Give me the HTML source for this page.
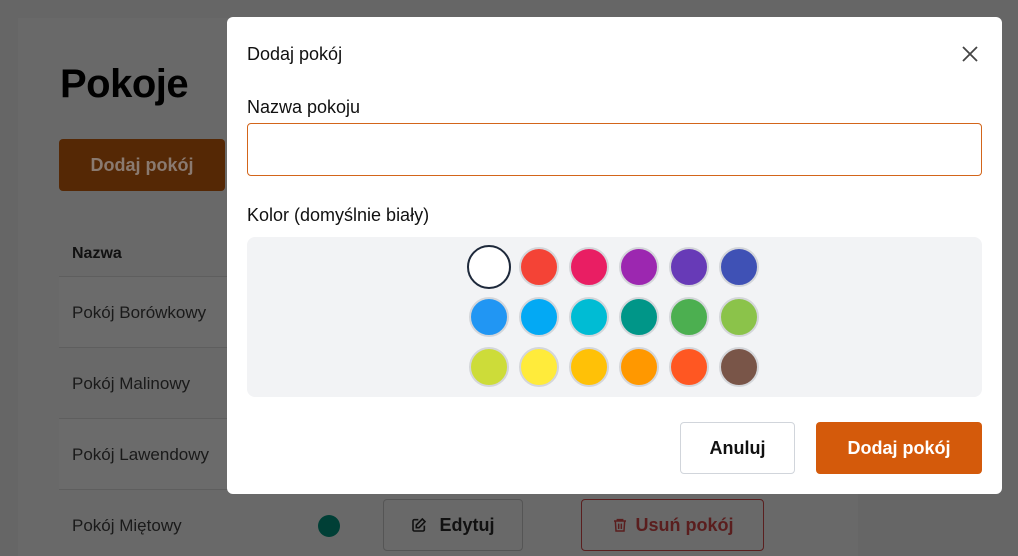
<!DOCTYPE html>
<html><head><meta charset="utf-8"><style>
*{box-sizing:border-box;margin:0;padding:0}
html{width:1018px;height:556px;overflow:hidden}
body{width:1018px;height:556px;overflow:hidden;background:#666;font-family:"Liberation Sans",sans-serif;position:relative}
.card{position:absolute;left:18px;top:18px;width:840px;height:538px;background:#696969}
.abs{position:absolute}
h1{position:absolute;left:60px;top:62px;font-size:40px;font-weight:bold;color:#000;letter-spacing:-0.5px}
.addbg{left:59px;top:139px;width:166px;height:52px;background:#552805;border-radius:4px;color:#8a7a70;font-size:18px;font-weight:bold;display:flex;align-items:center;justify-content:center}
.th{left:72px;top:245px;font-size:16px;font-weight:bold;color:#111}
.row{position:absolute;left:59px;width:799px;height:71px;border-top:1px solid #5e5e5e;font-size:17px;color:#1a1a1a;padding-left:13px;line-height:71px}
.modal{position:absolute;left:227px;top:17px;width:775px;height:477px;background:#fff;border-radius:6px}
.sw{position:absolute;width:38px;height:38px;border-radius:50%;border:2px solid #d4d6da}
</style></head><body>
<div class="card"></div>
<h1>Pokoje</h1>
<div class="abs addbg">Dodaj pokój</div>
<div class="abs th">Nazwa</div>
<div class="row" style="top:276px;background:#6b6b6b">Pokój Borówkowy</div>
<div class="row" style="top:347px">Pokój Malinowy</div>
<div class="row" style="top:418px;background:#6b6b6b">Pokój Lawendowy</div>
<div class="row" style="top:489px;height:67px">Pokój Miętowy</div>
<div class="abs" style="left:318px;top:515px;width:22px;height:22px;border-radius:50%;background:#003f36"></div>
<div class="abs" style="left:383px;top:499px;width:140px;height:52px;border:1px solid #555;border-radius:4px;font-size:18px;font-weight:bold;color:#111;display:flex;align-items:center;justify-content:center;gap:12px">
<svg width="16" height="16" viewBox="0 0 24 24" fill="none" stroke="#111" stroke-width="2.4"><path d="M11 4H5a2 2 0 0 0-2 2v13a2 2 0 0 0 2 2h13a2 2 0 0 0 2-2v-6"/><path d="M17 3l4 4-9 9H8v-4z"/></svg>Edytuj</div>
<div class="abs" style="left:581px;top:499px;width:183px;height:52px;border:1px solid #5a1f1f;border-radius:4px;font-size:18px;font-weight:bold;color:#5a1e1e;display:flex;align-items:center;justify-content:center;gap:8px">
<svg width="16" height="18" viewBox="0 0 24 24" fill="none" stroke="#5a1e1e" stroke-width="2.2"><path d="M3 6h18M8 6V4h8v2M5 6l1 15h12l1-15M10 10v8M14 10v8"/></svg>Usuń pokój</div>

<div class="modal">
<div class="abs" style="left:20px;top:27px;font-size:18px;color:#111">Dodaj pokój</div>
<svg class="abs" style="left:735px;top:29px" width="16" height="16" viewBox="0 0 16 16" stroke="#444" stroke-width="1.8"><path d="M1 1l14 14M15 1L1 15"/></svg>
<div class="abs" style="left:20px;top:80px;font-size:18px;color:#111">Nazwa pokoju</div>
<div class="abs" style="left:20px;top:106px;width:735px;height:53px;border:1px solid #d3651a;border-radius:4px"></div>
<div class="abs" style="left:20px;top:188px;font-size:18px;color:#111">Kolor (domyślnie biały)</div>
<div class="abs" style="left:20px;top:220px;width:735px;height:160px;background:#f2f3f5;border-radius:8px"></div>
<div class="sw" style="left:240px;top:228px;width:44px;height:44px;border-color:#1e293b;background:#fff"></div>
<div class="sw" style="left:242px;top:230px;width:40px;height:40px;border:none;display:none"></div>
<div class="sw" style="left:292px;top:230px;width:40px;height:40px;background:#f44336"></div>
<div class="sw" style="left:342px;top:230px;width:40px;height:40px;background:#e91e63"></div>
<div class="sw" style="left:392px;top:230px;width:40px;height:40px;background:#9c27b0"></div>
<div class="sw" style="left:442px;top:230px;width:40px;height:40px;background:#673ab7"></div>
<div class="sw" style="left:492px;top:230px;width:40px;height:40px;background:#3f51b5"></div>
<div class="sw" style="left:242px;top:280px;width:40px;height:40px;background:#2196f3"></div>
<div class="sw" style="left:292px;top:280px;width:40px;height:40px;background:#03a9f4"></div>
<div class="sw" style="left:342px;top:280px;width:40px;height:40px;background:#00bcd4"></div>
<div class="sw" style="left:392px;top:280px;width:40px;height:40px;background:#009688"></div>
<div class="sw" style="left:442px;top:280px;width:40px;height:40px;background:#4caf50"></div>
<div class="sw" style="left:492px;top:280px;width:40px;height:40px;background:#8bc34a"></div>
<div class="sw" style="left:242px;top:330px;width:40px;height:40px;background:#cddc39"></div>
<div class="sw" style="left:292px;top:330px;width:40px;height:40px;background:#ffeb3b"></div>
<div class="sw" style="left:342px;top:330px;width:40px;height:40px;background:#ffc107"></div>
<div class="sw" style="left:392px;top:330px;width:40px;height:40px;background:#ff9800"></div>
<div class="sw" style="left:442px;top:330px;width:40px;height:40px;background:#ff5722"></div>
<div class="sw" style="left:492px;top:330px;width:40px;height:40px;background:#795548"></div>
<div class="abs" style="left:453px;top:405px;width:115px;height:52px;border:1px solid #d1d5db;border-radius:4px;font-size:18px;font-weight:bold;color:#111;display:flex;align-items:center;justify-content:center">Anuluj</div>
<div class="abs" style="left:589px;top:405px;width:166px;height:52px;background:#d45a0b;border-radius:4px;font-size:18px;font-weight:bold;color:#fff;display:flex;align-items:center;justify-content:center">Dodaj pokój</div>
</div>
</body></html>
